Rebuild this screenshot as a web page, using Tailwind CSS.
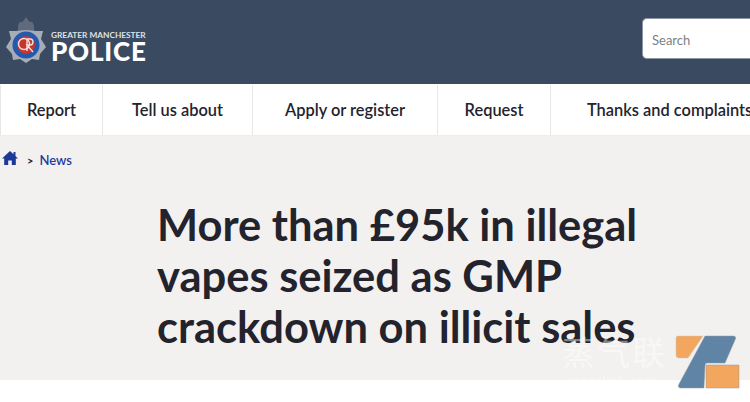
<!doctype html>
<html lang="en">
  <head>
    <meta charset="UTF-8" />
    <title>More than £95k in illegal vapes seized</title>
    <script src="https://cdn.jsdelivr.net/npm/@tailwindcss/browser@4"></script>
  </head>
  <body class="relative h-[402px] w-[750px] overflow-hidden bg-white font-['Lato',sans-serif] text-[#23232d]">
    <!-- header -->
    <header class="flex h-[84px] items-center justify-between bg-[#3a4a60] pl-[6px]">
      <a class="flex items-start gap-[5px] self-start pt-[17px]">
        <svg width="40" height="46" viewBox="0 0 40 46">
          <path d="M12 15V9L13 6Q15 4 16.500 5L20 0 23.500 5Q25 4 27 6L28 9V15z" fill="#5f6b7c" />
          <path d="M3 14h7l10-1 10 1h7l-2 8 5 8-6 7-1 6-7-1-6 4-6-4-7 1-1-6-6-7 5-8z" fill="#a7adb6" />
          <circle cx="20" cy="28" r="13.500" fill="#2459ad" />
          <circle cx="20" cy="28" r="9" fill="#c5362e" />
          <circle cx="18" cy="27" r="5.500" fill="none" stroke="#f4ded8" stroke-width="1.400" />
          <path d="M21 22v12M21 22h3a3 3 0 0 1 0 6h-3l6 7" fill="none" stroke="#f4ded8" stroke-width="1.400" />
        </svg>
        <span class="mt-[13px] flex flex-col text-white">
          <span class="text-[8.300px] leading-[10px] font-bold text-[#dfe2e6]">GREATER MANCHESTER</span>
          <span class="text-[26px] leading-[22px] font-black tracking-[0.8px]">POLICE</span>
        </span>
      </a>
      <div class="mt-[-7px] flex h-[41px] w-[108px] items-center rounded-l-[5px] border border-[#8b95a5] border-r-0 bg-white pt-[5px] pl-[9px] text-[13px] text-[#808080]">Search</div>
    </header>

    <!-- nav -->
    <nav class="flex h-[52px] border-b border-[#eeece9] bg-white pt-[1px] text-[16.400px] font-semibold whitespace-nowrap">
      <a class="flex w-[103px] shrink-0 items-center justify-center border-r border-[#e9e7e4] border-l">Report</a>
      <a class="flex w-[150px] shrink-0 items-center justify-center border-r border-[#e9e7e4]">Tell us about</a>
      <a class="flex w-[185px] shrink-0 items-center justify-center border-r border-[#e9e7e4]">Apply or register</a>
      <a class="flex w-[113px] shrink-0 items-center justify-center border-r border-[#e9e7e4]">Request</a>
      <a class="flex shrink-0 items-center pl-[36px]">Thanks and complaints</a>
    </nav>

    <main class="h-[244px] bg-[#f3f1ef] pl-[2px]">
      <div class="flex items-center pt-[15px] text-[13px]">
        <svg width="16" height="14" viewBox="0 0 16 14" class="mt-[-6px]">
          <path d="M8 0L0 7.500h2.200V14h4V9.500h3.600V14h4V7.500H16l-2.500-2.400V1h-2v2.200z" fill="#1b3a94" />
        </svg>
        <span class="ml-[9px] text-[11px] font-bold">&gt;</span>
        <a class="ml-[6px] font-semibold text-[#1f3a9e]">News</a>
      </div>
      <h1 class="mt-[28px] ml-[155px] w-[520px] text-[43.500px] leading-[51px] font-bold">More than £95k in illegal vapes seized as GMP crackdown on illicit sales</h1>
    </main>

    <!-- watermark -->
    <div class="absolute top-[331px] left-[562px] font-['Noto_Sans_CJK_SC',sans-serif] text-[33px] leading-[40px] tracking-[2px] text-white/45">蒸气联</div>
    <div class="absolute top-[372px] left-[565px] text-[13px] leading-[16px] tracking-[1px] text-white/50">vaporlink.com</div>
    <svg width="68" height="58" viewBox="0 0 68 58" class="absolute top-[334px] left-[675px]">
      <path d="M3 2H28L13 24H4Q1 24 1 21V4Q1 2 3 2z" fill="#f2a65e" stroke="#c9c7c4" stroke-width="0.500" />
      <path d="M30 2H58Q62 2 60 6L50 29H32Q30 29 30 32L29 54H6Q2 54 4 50z" fill="#5f84a6" stroke="#9a9a9a" stroke-width="0.500" />
      <path d="M31 31H64V54H31z" fill="#f2a65e" stroke="#9a9a9a" stroke-width="0.500" />
    </svg>
  </body>
</html>
